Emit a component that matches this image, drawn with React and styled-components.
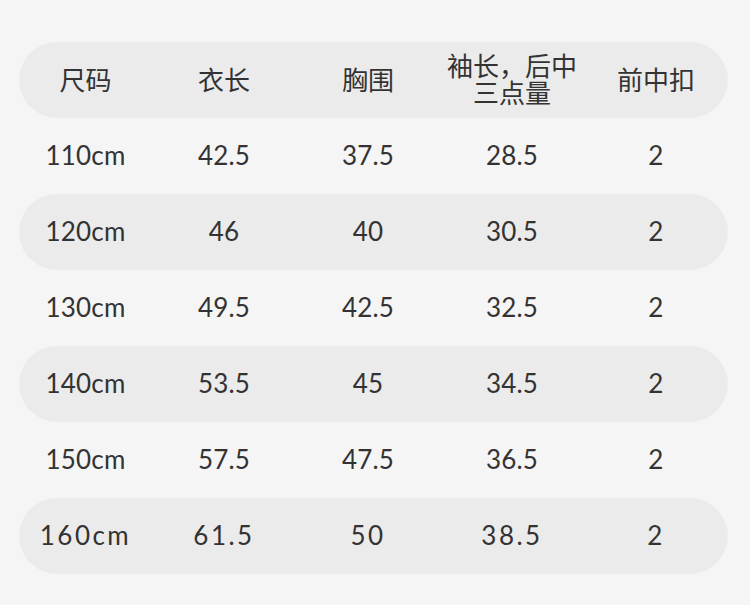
import React from 'react';
import styled, { createGlobalStyle } from 'styled-components';

const GlobalStyle = createGlobalStyle`
  html, body {
    margin: 0;
    padding: 0;
    background: #f5f5f5;
  }
  body {
    font-family: Lato, "Noto Sans CJK SC", sans-serif;
    color: #333;
  }
`;

const Page = styled.div`
  width: 750px;
  height: 605px;
  box-sizing: border-box;
  padding: 42px 22px 0 19px;
  background: #f5f5f5;
`;

const Table = styled.div`
  display: flex;
  flex-direction: column;
`;

const Row = styled.div`
  display: grid;
  grid-template-columns: 133px repeat(4, 144px);
  height: 76px;
  border-radius: 38px;
  background: ${p => (p.$shaded ? '#ebebeb' : 'transparent')};
`;

const Cell = styled.div`
  display: flex;
  align-items: center;
  justify-content: center;
  text-align: center;
  padding-bottom: 3px;
  font-size: 26px;
  letter-spacing: ${p => (p.$spaced ? '2.5px' : '0.2px')};
  color: #333;
`;

const HeadCell = styled(Cell)`
  flex-direction: column;
  padding-bottom: 2px;
  font-family: "Noto Sans CJK SC", sans-serif;
  font-size: 26px;
  letter-spacing: 0;
  color: #333;
`;

const HeadLine = styled.div`
  line-height: 26px;
  height: 27px;
  white-space: nowrap;
`;

const headers = [['尺码'], ['衣长'], ['胸围'], ['袖长，后中', '三点量'], ['前中扣']];

const rows = [
  ['110cm', '42.5', '37.5', '28.5', '2'],
  ['120cm', '46', '40', '30.5', '2'],
  ['130cm', '49.5', '42.5', '32.5', '2'],
  ['140cm', '53.5', '45', '34.5', '2'],
  ['150cm', '57.5', '47.5', '36.5', '2'],
  ['160cm', '61.5', '50', '38.5', '2', true],
];

export default function App() {
  return (
    <Page>
      <GlobalStyle />
      <Table>
        <Row $shaded>
          {headers.map((lines, i) => (
            <HeadCell key={i}>
              {lines.map(l => (
                <HeadLine key={l}>{l}</HeadLine>
              ))}
            </HeadCell>
          ))}
        </Row>
        {rows.map((r, i) => (
          <Row key={r[0]} $shaded={i % 2 === 1}>
            {r.slice(0, 5).map((v, j) => (
              <Cell key={j} $spaced={r[5]}>
                {v}
              </Cell>
            ))}
          </Row>
        ))}
      </Table>
    </Page>
  );
}
